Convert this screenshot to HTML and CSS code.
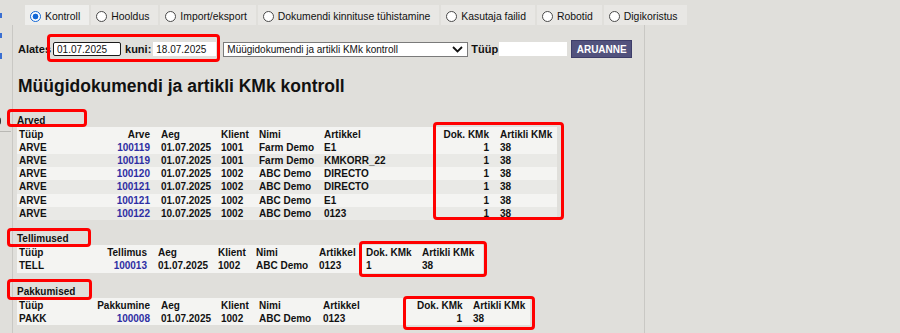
FILE: index.html
```html
<html>
<head>
<link rel="stylesheet" href="styles.css">
</head>
<body>

<div class="side">
  <i class="mark"></i>
  <i class="mark"></i>
  <i class="mark tall"></i>
  <i class="cut"></i>
  <i class="rule"></i>
</div>

<div class="main">
  <div class="tabs">
    <div class="tab active"><span class="radio"></span>Kontroll</div>
    <div class="tab"><span class="radio"></span>Hooldus</div>
    <div class="tab"><span class="radio"></span>Import/eksport</div>
    <div class="tab"><span class="radio"></span>Dokumendi kinnituse tühistamine</div>
    <div class="tab"><span class="radio"></span>Kasutaja failid</div>
    <div class="tab"><span class="radio"></span>Robotid</div>
    <div class="tab"><span class="radio"></span>Digikoristus</div>
  </div>

  <div class="panel">
    <div class="filters">
      <label class="lbl first">Alates</label>
      <input class="fld from" value="01.07.2025">
      <label class="lbl kuni">kuni:</label>
      <input class="fld to" value="18.07.2025">
      <div class="select">
        <span>Müügidokumendi ja artikli KMk kontroll</span>
        <svg width="11" height="7" viewBox="0 0 11 7"><path d="M1 1l4.5 4.5L10 1" fill="none" stroke="#111" stroke-width="1.8"/></svg>
      </div>
      <label class="lbl tyyp">Tüüp</label>
      <input class="fld kind" value="">
      <button class="btn">ARUANNE</button>
    </div>

    <h1 class="title">Müügidokumendi ja artikli KMk kontroll</h1>

    <h4 class="sect first">Arved</h4>
    <table class="grid arved">
      <colgroup><col class="c1"><col class="c2"><col class="c3"><col class="c4"><col class="c5"><col class="c6"><col class="c7"><col class="c8"></colgroup>
      <tr><th>Tüüp</th><th class="num">Arve</th><th>Aeg</th><th>Klient</th><th>Nimi</th><th>Artikkel</th><th class="num">Dok. KMk</th><th>Artikli KMk</th></tr>
      <tr><td>ARVE</td><td class="num"><a>100119</a></td><td>01.07.2025</td><td>1001</td><td>Farm Demo</td><td>E1</td><td class="num">1</td><td>38</td></tr>
      <tr><td>ARVE</td><td class="num"><a>100119</a></td><td>01.07.2025</td><td>1001</td><td>Farm Demo</td><td>KMKORR_22</td><td class="num">1</td><td>38</td></tr>
      <tr><td>ARVE</td><td class="num"><a>100120</a></td><td>01.07.2025</td><td>1002</td><td>ABC Demo</td><td>DIRECTO</td><td class="num">1</td><td>38</td></tr>
      <tr><td>ARVE</td><td class="num"><a>100121</a></td><td>01.07.2025</td><td>1002</td><td>ABC Demo</td><td>DIRECTO</td><td class="num">1</td><td>38</td></tr>
      <tr><td>ARVE</td><td class="num"><a>100121</a></td><td>01.07.2025</td><td>1002</td><td>ABC Demo</td><td>E1</td><td class="num">1</td><td>38</td></tr>
      <tr><td>ARVE</td><td class="num"><a>100122</a></td><td>10.07.2025</td><td>1002</td><td>ABC Demo</td><td>0123</td><td class="num">1</td><td>38</td></tr>
    </table>

    <h4 class="sect">Tellimused</h4>
    <table class="grid tell">
      <colgroup><col class="c1"><col class="c2"><col class="c3"><col class="c4"><col class="c5"><col class="c6"><col class="c7"><col class="c8"></colgroup>
      <tr><th>Tüüp</th><th class="num">Tellimus</th><th>Aeg</th><th>Klient</th><th>Nimi</th><th>Artikkel</th><th>Dok. KMk</th><th>Artikli KMk</th></tr>
      <tr><td>TELL</td><td class="num"><a>100013</a></td><td>01.07.2025</td><td>1002</td><td>ABC Demo</td><td>0123</td><td>1</td><td>38</td></tr>
    </table>

    <h4 class="sect last">Pakkumised</h4>
    <table class="grid pakk">
      <colgroup><col class="c1"><col class="c2"><col class="c3"><col class="c4"><col class="c5"><col class="c6"><col class="c7"><col class="c8"></colgroup>
      <tr><th>Tüüp</th><th class="num">Pakkumine</th><th>Aeg</th><th>Klient</th><th>Nimi</th><th>Artikkel</th><th class="num">Dok. KMk</th><th>Artikli KMk</th></tr>
      <tr><td>PAKK</td><td class="num"><a>100008</a></td><td>01.07.2025</td><td>1002</td><td>ABC Demo</td><td>0123</td><td class="num">1</td><td>38</td></tr>
    </table>
  </div>
</div>

<!-- red markers drawn over the page -->
<div class="hl hl-dates"></div>
<div class="hl hl-arved"></div>
<div class="hl hl-arved-km"></div>
<div class="hl hl-tell"></div>
<div class="hl hl-tell-km"></div>
<div class="hl hl-pakk"></div>
<div class="hl hl-pakk-km"></div>

</body>
</html>
```

FILE: styles.css
```css
body      { margin:0;height:333px;overflow:hidden;display:flex;background:#e0dfdb;
            font-family:"Liberation Sans",Arial,sans-serif;color:#111 }

/* left frame remains */
.side     { width:12px;display:flex;flex-direction:column;overflow:hidden }
.mark     { display:block;width:2px;height:5px;margin-top:15px;background:#3a6fd2 }
.mark:first-child { margin-top:13px }
.mark.tall{ height:6px }
.cut      { display:block;width:3px;height:8px;margin-top:58px;margin-left:-2px;
            border:1.5px solid #333;border-left:0;border-radius:0 4px 4px 0;box-sizing:border-box }
.rule     { display:block;width:11px;height:1px;margin-top:6px;background:#b9b8b4 }

.main     { display:flex;flex-direction:column;width:670px }

/* tabs */
.tabs     { display:flex;gap:2px;padding:5px 0 0 13px;height:25px;box-sizing:border-box }
.tab      { display:flex;align-items:center;height:20px;padding:3px 9px 0 5px;box-sizing:border-box;
            background:#e8e7e4;font-size:10.4px;line-height:13px;white-space:nowrap }
.tab.active { background:#eeeeec }
.radio    { width:11px;height:11px;margin-right:4px;border:1px solid #4a4a4a;border-radius:50%;
            background:#fff;box-sizing:border-box }
.active .radio { border:1.5px solid #1267d6;
            background:radial-gradient(circle,#1267d6 0 2.6px,#fff 3.2px) }

/* panel */
.panel    { flex:1;width:633px;box-sizing:border-box;padding:0 0 0 4px;
            border-left:1px solid #c9c8c4;border-right:1px solid #c9c8c4 }

.filters  { display:flex;align-items:center;height:18px;margin-top:15px }
.lbl      { font-size:11px;font-weight:bold;white-space:nowrap }
.lbl.first{ margin-left:1px }
.lbl.kuni { margin-left:4px }
.lbl.tyyp { margin-left:3px }
.fld      { height:14px;padding:0 2px;margin:0;border:1px solid #fff;background:#fff;box-sizing:border-box;
            font-family:"Liberation Sans",Arial,sans-serif;font-size:10px;color:#111;outline:none }
.fld.from { width:68px;margin-left:2px;padding:0 3px;border-color:#1b1b1b;border-radius:2px }
.fld.to   { width:63px;margin-left:2px }
.fld.kind { width:68px;margin-left:1px }
.select   { display:flex;align-items:center;justify-content:space-between;width:245px;height:15px;
            margin-left:7px;padding:0 4px 0 3px;box-sizing:border-box;border:1px solid #7a7a7a;
            background:#fff;font-size:10px }
.btn      { width:61px;height:18px;margin-left:4px;padding:0;background:#52527d;border:1px solid #3d3d68;
            color:#fff;font-family:"Liberation Sans",Arial,sans-serif;font-size:10px;font-weight:bold }

.title    { margin:18px 0 0 1px;font-size:17.5px;line-height:20px;font-weight:bold }

.sect     { margin:13px 0 0;font-size:10px;line-height:12px;font-weight:bold }
.sect.first { margin-top:18.5px }
.sect.last  { margin-top:13.5px }

/* result tables */
.grid     { table-layout:fixed;border-collapse:collapse;font-size:10px;font-weight:bold;background:#f4f4f2 }
.grid th,
.grid td  { padding:0 2px;text-align:left;white-space:nowrap;overflow:visible }
.grid th  { height:14px;padding-top:1px;line-height:13px;box-sizing:border-box }
.grid td  { line-height:13.3px }
.grid .num{ text-align:right;padding-right:9px }
.grid tr:nth-child(odd) td { background:#e9e9e6 }
.grid a   { color:#2e2ea3 }

.arved    { width:540px }
.arved .c1{ width:97px }  .arved .c2{ width:45px }  .arved .c3{ width:60px }  .arved .c4{ width:38px }
.arved .c5{ width:65px }  .arved .c6{ width:119px } .arved .c7{ width:57px }  .arved .c8{ width:59px }

.tell     { width:466px }
.tell .c1 { width:83px }  .tell .c2 { width:56px }  .tell .c3 { width:60px }  .tell .c4 { width:38px }
.tell .c5 { width:63px }  .tell .c6 { width:47px }  .tell .c7 { width:56px }  .tell .c8 { width:63px }

.pakk     { width:513px }
.pakk .c1 { width:78px }  .pakk .c2 { width:64px }  .pakk .c3 { width:60px }  .pakk .c4 { width:38px }
.pakk .c5 { width:64px }  .pakk .c6 { width:94px }  .pakk .c7 { width:56px }  .pakk .c8 { width:59px }
.pakk th.num:nth-child(2) { padding-left:0 }

/* red highlight frames */
.hl       { position:absolute;border:3px solid #f00;border-radius:4px;box-sizing:border-box }
.hl-dates   { left:47px;top:34px;width:173px;height:28px }
.hl-arved   { left:7px;top:109px;width:80px;height:18px }
.hl-arved-km{ left:433px;top:122px;width:131px;height:98px }
.hl-tell    { left:7px;top:228px;width:84px;height:19px }
.hl-tell-km { left:359px;top:241px;width:128px;height:36px }
.hl-pakk    { left:7px;top:279px;width:85px;height:21px }
.hl-pakk-km { left:403px;top:296px;width:132px;height:34px }
```
